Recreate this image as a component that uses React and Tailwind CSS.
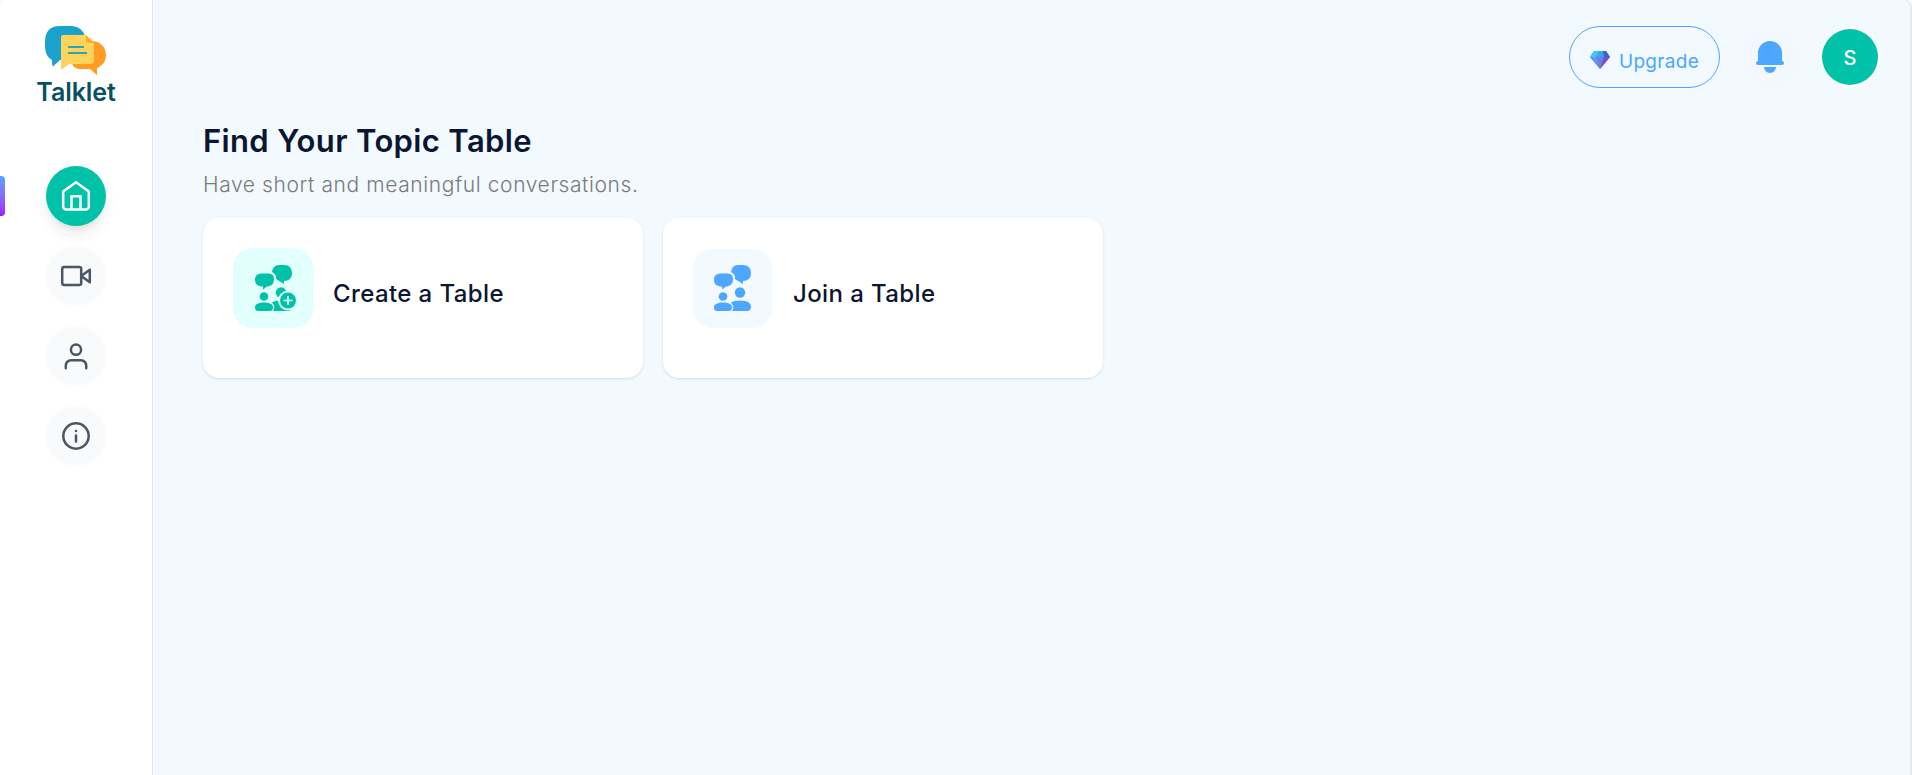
const navItems = [
  {
    id: "home",
    active: true,
    icon: (
      <>
        <path d="M2.200 10.600 15 1.300l12.800 9.300v14.800a3.200 3.200 0 0 1-3.200 3.200H5.400a3.200 3.200 0 0 1-3.200-3.200z" />
        <path d="M10.500 28V15.200h9V28" />
      </>
    ),
  },
  {
    id: "meetings",
    icon: (
      <>
        <rect x="1.200" y="6" width="19" height="18" rx="2" />
        <path d="m20.200 15 8.600-6.300v12.600z" />
      </>
    ),
  },
  {
    id: "profile",
    icon: (
      <>
        <circle cx="15" cy="8.700" r="5.100" />
        <path d="M4.800 27.200v-2.700a5.300 5.300 0 0 1 5.300-5.300h9.800a5.300 5.300 0 0 1 5.300 5.300v2.700" />
      </>
    ),
  },
  {
    id: "about",
    icon: (
      <>
        <circle cx="15" cy="15" r="12.700" />
        <path d="M15 14.600v6M15 10v.100" />
      </>
    ),
  },
];

function Logo() {
  return (
    <div className="flex flex-col items-center">
      <svg width="61" height="50" viewBox="0 0 61 50">
        <path d="M15 0h11c7 0 12 4 14 10v24H15l-7 6.500q-1-.5-1-6.500Q0 30 0 20v-4Q0 0 15 0z" fill="#19a3cc" />
        <path d="M42 15h4c9 0 15 6 15 14 0 7-4 11-9 13v7l-7-6H36c-5 0-8-2-9-6z" fill="#ff9c24" />
        <path d="M18 9h23l8 8v17q0 4-4 4H24l-8 6V11q0-2 2-2z" fill="#fdd45b" />
        <path d="M41 9l8 8h-5q-3 0-3-3z" fill="#ffb10a" />
        <path d="M23 21h16M23 27h19" stroke="#2da3b5" strokeWidth="2" />
      </svg>
      <div className="text-[25px] leading-8 font-semibold tracking-[-0.1px] text-[#055160]">Talklet</div>
    </div>
  );
}

function Sidebar() {
  return (
    <aside className="flex w-[153px] shrink-0 flex-col items-center rounded-tl-lg border-r border-[#d9e6fb] bg-white pt-[26px]">
      <Logo />
      <nav className="mt-[58px] flex w-full flex-col items-center gap-5">
        {navItems.map((item) => (
          <div key={item.id} className="relative flex w-full justify-center">
            {item.active && (
              <span className="absolute top-[10px] left-0 h-10 w-[5px] rounded-r bg-linear-to-b from-[#51a2ff] to-[#9810fa]" />
            )}
            <button
              className={
                item.active
                  ? "flex size-[60px] items-center justify-center rounded-full bg-[#00c2a8] text-white shadow-lg"
                  : "flex size-[60px] items-center justify-center rounded-full bg-gray-50 text-[#4a5565]"
              }
            >
              <svg width="30" height="30" viewBox="0 0 30 30" fill="none" stroke="currentColor" strokeWidth="2.500" strokeLinecap="round" strokeLinejoin="round" overflow="visible">
                {item.icon}
              </svg>
            </button>
          </div>
        ))}
      </nav>
    </aside>
  );
}

function Gem() {
  return (
    <svg width="20" height="18" viewBox="0 0 20 18">
      <path d="M4 0h12l4 6-10 12L0 6z" fill="#488be5" />
      <path d="M4 0h5L6 6H0z" fill="#43c7fa" />
      <path d="M9 0h4l1 6H6z" fill="#35a8ef" />
      <path d="M13 0h3l4 6h-6z" fill="#3565ca" />
      <path d="M0 6h6l4 12z" fill="#6397f0" />
      <path d="M6 6h8l-4 12z" fill="#727de3" />
      <path d="M14 6h6L10 18z" fill="#7c4ec2" />
    </svg>
  );
}

function Header() {
  return (
    <header className="flex items-start justify-end pt-[26px] pr-8">
      <button className="flex h-[62px] w-[151px] items-center justify-center gap-[9px] rounded-full border border-[#4da6ff] pt-[6px] text-[#4da6ff]">
        <Gem />
        <span className="pt-[3px] text-[19px] leading-6 tracking-[0.3px]">Upgrade</span>
      </button>
      <button className="mt-px ml-5 flex size-[60px] items-center justify-center rounded-full bg-[#f3f8ff] text-[#4da6ff]">
        <svg width="28" height="32" viewBox="0 0 28 32" fill="currentColor">
          <path d="M2 20V12a12 12 0 0 1 24 0v8a2 2 0 0 1 0 4H2a2 2 0 0 1 0-4zM8 26h12a6 6 0 0 1-12 0z" />
        </svg>
      </button>
      <div className="mt-[3px] ml-[22px] flex size-14 items-center justify-center rounded-full bg-[#00c2a8] pt-[2px] text-xl font-medium text-white ring-2 ring-white">S</div>
    </header>
  );
}

function PeopleIcon({ plus }) {
  return (
    <svg width="42" height="47" viewBox="0 0 42 47" fill="currentColor">
      <path d="M24 0h5c5 0 8 3 8 8s-3 8-8 8v3l-8-5q1-4-4-7 1-7 7-7z" />
      <path d="M7 8.500h6c4 0 6 2 6 6 0 5-4 7-7 7l-4 3v-3c-5 0-8-2-8-7 0-4 3-6 7-6z" />
      <circle cx="9" cy="31.500" r="4.300" />
      <path d="M0 42c0-3 4-4.500 9-4.500s9 1.500 9 4.500c0 3-1 4-4 4H4c-3 0-4-1-4-4z" />
      <circle cx="26" cy="27.500" r="5.200" />
      <path d="M17 37.500q3-2 9-2 11 0 11 6 0 4.500-4 4.500H18q3-4-1-8.500z" />
      {plus && (
        <>
          <circle cx="33" cy="35.500" r="10" fill="#e1fffb" />
          <circle cx="33" cy="35.500" r="8" />
          <path d="M33 31v9M28.500 35.500h9" stroke="#e1fffb" strokeWidth="1.700" />
        </>
      )}
    </svg>
  );
}

function Card({ title, plus }) {
  return (
    <div className="flex h-40 w-[440px] items-start rounded-2xl bg-white px-[30px] pt-[30px] shadow-sm">
      <div
        className={
          plus
            ? "flex size-20 items-center justify-center rounded-[20px] bg-[#e1fffb] pl-[5px] text-[#00c2a8]"
            : "mt-px mr-px flex size-[79px] items-center justify-center rounded-[20px] bg-[#f2f9ff] pl-[5px] text-[#4da6ff]"
        }
      >
        <PeopleIcon plus={plus} />
      </div>
      <h3 className="mt-[30px] ml-5 text-2xl leading-8 font-medium tracking-[0.4px] text-[#0b1630]">{title}</h3>
    </div>
  );
}

export default function App() {
  return (
    <div className="flex h-screen min-h-[775px] bg-[#f2f9ff] font-['Inter',sans-serif]">
      <Sidebar />
      <div className="min-w-0 flex-1 rounded-tr-lg border-r-2 border-[#e5eaf0]">
        <Header />
        <main className="pt-[33px] pl-[50px]">
          <h1 className="text-[31px] leading-10 font-semibold tracking-[0.35px] text-[#0b1630]">Find Your Topic Table</h1>
          <p className="mt-2 text-[21px] leading-8 font-light tracking-[0.6px] text-[#7a7a7a]">Have short and meaningful conversations.</p>
          <div className="mt-[17px] flex gap-5">
            <Card title="Create a Table" plus />
            <Card title="Join a Table" />
          </div>
        </main>
      </div>
    </div>
  );
}
